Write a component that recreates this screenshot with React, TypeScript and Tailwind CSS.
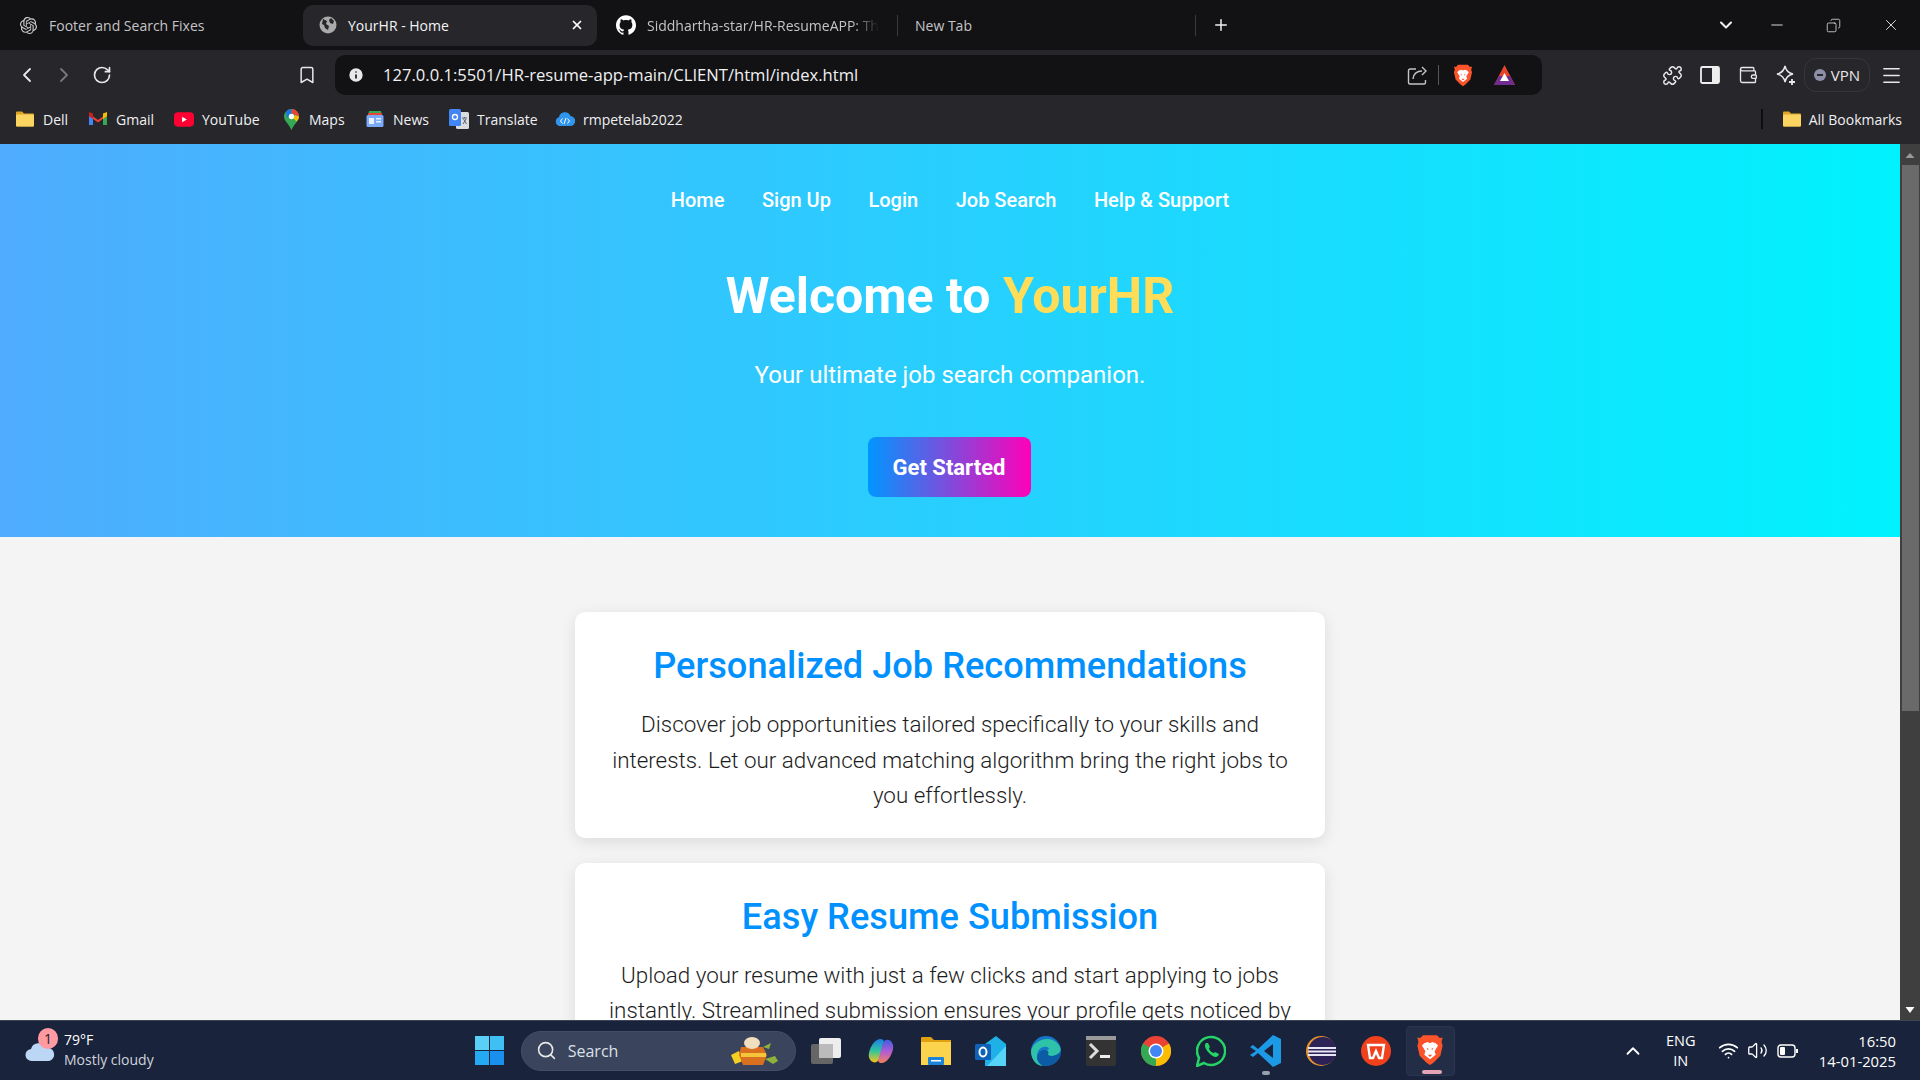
import React from "react";
import { ChevronLeft, ChevronRight, RotateCw, Bookmark, Info, Puzzle, Wallet, Menu, ChevronDown, ChevronUp, Minus, X, Plus, Search, Wifi, Volume2, Copy } from "lucide-react";
import { SiOpenai, SiGithub } from "react-icons/si";

const Brave = ({ s = 22 }: { s?: number }) => (
  <svg width={s} height={s * 1.15} viewBox="0 0 24 28">
    <path d="M6 1h12l2.500 2.500L23 3l-1 4 1 3-2 9-6 6-3 2-3-2-6-6-2-9 1-3-1-4 2.500.5z" fill="#fb542b" />
    <path d="M7 8l3-1 2 1 2-1 3 1 2 2-3 5 1 3-5 4-5-4 1-3-3-5z" fill="#fff" />
    <path d="M9 12l2 1-1 1zM15 12l-2 1 1 1zM10 18h4l-2 2z" fill="#fb542b" />
  </svg>
);
const Folder = ({ s = 20 }: { s?: number }) => (
  <svg width={s} height={s} viewBox="0 0 20 20">
    <path d="M1 3.500A1 1 0 0 1 2 2.500h5l2 2h9a1 1 0 0 1 1 1v11a1 1 0 0 1-1 1H2a1 1 0 0 1-1-1z" fill="#e0a526" />
    <rect x="1" y="5.500" width="18" height="12" rx="1" fill="#fcd462" />
  </svg>
);
const Gmail = () => (
  <svg width="18" height="14" viewBox="0 0 18 14">
    <path d="M0 2v11h4V5z" fill="#4285f4" /><path d="M18 2v11h-4V5z" fill="#34a853" />
    <path d="M0 1.500 9 8l9-6.500V4L9 10.500 0 4z" fill="#ea4335" /><path d="M14 1.500 18 0v4l-4 3z" fill="#fbbc04" /><path d="M0 0l4 1.500V7L0 4z" fill="#c5221f" />
  </svg>
);
const YouTube = () => (
  <svg width="21" height="15" viewBox="0 0 21 15"><rect width="21" height="15" rx="4" fill="#ff0033" /><path d="M8.500 4.500l5 3-5 3z" fill="#fff" /></svg>
);
const MapsPin = () => (
  <svg width="15" height="21" viewBox="0 0 15 21">
    <path d="M7.500 0A7.500 7.500 0 0 1 15 7.500C15 12 10 15 7.500 21 5 15 0 12 0 7.500A7.500 7.500 0 0 1 7.500 0z" fill="#34a853" />
    <path d="M2 2.500A7.500 7.500 0 0 1 7.500 0V5L3 9z" fill="#1a73e8" /><path d="M7.500 0A7.500 7.500 0 0 1 15 7.500L11 6 7.500 4z" fill="#ea4335" /><path d="M15 7.500c0 2-1 3.500-2.500 5L9.500 9.500 11 6z" fill="#fbbc04" />
    <circle cx="7.500" cy="7.500" r="2.700" fill="#fff" />
  </svg>
);
const News = () => (
  <svg width="18" height="18" viewBox="0 0 18 18">
    <path d="M3 1h12l1 5H2z" fill="#34a853" /><path d="M2 3h14v3H2z" fill="#ea4335" /><rect x="0.500" y="5" width="17" height="12" rx="1.500" fill="#7baaf7" />
    <rect x="3" y="8" width="5" height="6" fill="#e8f0fe" /><rect x="10" y="8" width="5" height="1.500" fill="#e8f0fe" /><rect x="10" y="11" width="5" height="1.500" fill="#e8f0fe" />
  </svg>
);
const Translate = () => (
  <svg width="20" height="21" viewBox="0 0 20 21">
    <rect x="7" y="3" width="13" height="17" rx="1.500" fill="#dadce0" /><rect x="0" y="0" width="12" height="17" rx="1.500" fill="#4285f4" />
    <circle cx="6" cy="8" r="2.500" fill="none" stroke="#fff" strokeWidth="1.300" /><path d="M13 9h5M15.500 8v1M14 15l3-5M14.500 10l3 5" stroke="#5f6368" strokeWidth="1" />
  </svg>
);
const CloudCode = () => (
  <svg width="20" height="16" viewBox="0 0 20 16">
    <path d="M5 15A4.500 4.500 0 0 1 4 6.200 6 6 0 0 1 15.500 5 5 5 0 0 1 15 15z" fill="#2f95ee" />
    <path d="M7.500 7.500 5.500 10l2 2.500M12.500 7.500l2 2.500-2 2.500M11 7l-2 6" stroke="#fff" strokeWidth="1" fill="none" />
  </svg>
);

const Bm = ({ icon, label, w }: { icon: React.ReactNode; label: string; w: string }) => (
  <div className={`flex items-center gap-[8px] ${w}`}>
    <span className="flex w-[20px] justify-center">{icon}</span>
    <span className="text-[14px] text-[#f0f0f2]">{label}</span>
  </div>
);

const Card = ({ title, children }: { title: string; children: React.ReactNode }) => (
  <section className="w-[750px] shrink-0 rounded-[10px] bg-white px-[30px] pb-[24px] pt-[27px] text-center shadow-[0_4px_15px_rgba(0,0,0,0.1)]">
    <h2 className="text-[36.200px] font-medium leading-[54px] text-[#0091ff]">{title}</h2>
    <p className="mt-[14px] text-[22.400px] font-light leading-[35.600px] text-[#1c1c1c]">{children}</p>
  </section>
);

const Tb = ({ children, w }: { children: React.ReactNode; w: string }) => (
  <div className={`flex items-center justify-center ${w}`}>{children}</div>
);

export default function App() {
  return (
    <div className="flex h-screen w-[1920px] flex-col overflow-hidden bg-[#f4f4f4] [font-family:'Open_Sans',sans-serif]">
      {/* tabs */}
      <div className="flex h-[50px] shrink-0 items-center bg-[#121214] text-[14px] text-[#c4c4c8]">
        <div className="flex w-[303px] items-center gap-[12px] pl-[20px]">
          <SiOpenai size={17} color="#d0d0d0" />
          <span>Footer and Search Fixes</span>
        </div>
        <div className="flex h-[41px] w-[294px] items-center rounded-[10px] bg-[#26262b] pl-[16px] pr-[13px] text-[#f4f4f6]">
          <svg width="18" height="18" viewBox="0 0 18 18"><circle cx="9" cy="9" r="8.500" fill="#aaa" /><path d="M4 3l4 2-1 3 3 2-1 4-3-2-1-3-2-1zM12 2l3 3-1 3-3-1-1-3z" fill="#26262b" /></svg>
          <span className="ml-[11px] flex-1">YourHR - Home</span>
          <X size={14} strokeWidth={3} color="#fff" />
        </div>
        <div className="flex w-[301px] items-center gap-[11px] overflow-hidden border-r border-[#3a3a3e] pl-[19px] pr-[16px]">
          <SiGithub size={20} color="#fff" className="shrink-0" />
          <span className="whitespace-nowrap [mask-image:linear-gradient(90deg,#000_88%,transparent)]">Siddhartha-star/HR-ResumeAPP: Th</span>
        </div>
        <div className="flex w-[298px] items-center border-r border-[#3a3a3e] pl-[17px]"><span>New Tab</span></div>
        <Plus size={18} strokeWidth={2} color="#f0f0f0" className="ml-[16px]" />
        <div className="ml-auto flex items-center text-[#eee]">
          <ChevronDown size={20} strokeWidth={2.500} />
          <Minus size={18} strokeWidth={1.200} className="ml-[32px]" />
          <Copy size={15} strokeWidth={1.200} className="ml-[40px] -scale-x-100" />
          <X size={18} strokeWidth={1.200} className="ml-[41px] mr-[20px]" />
        </div>
      </div>
      {/* toolbar */}
      <div className="flex h-[50px] shrink-0 items-center bg-[#26262b] text-[#e8e8ea]">
        <ChevronLeft size={24} strokeWidth={1.800} className="ml-[15px]" />
        <ChevronRight size={24} strokeWidth={1.800} color="#77777c" className="ml-[13px]" />
        <RotateCw size={20} strokeWidth={2} className="ml-[16px]" />
        <Bookmark size={20} strokeWidth={1.800} className="ml-[185px]" />
        <div className="ml-[18px] flex h-[40px] w-[1207px] items-center rounded-[10px] bg-[#121214] pl-[12px] pr-[26px]">
          <Info size={18} fill="#e8e8ea" color="#121214" strokeWidth={2.200} />
          <span className="ml-[18px] text-[16.600px] text-[#f0f0f2]">127.0.0.1:5501/HR-resume-app-main/CLIENT/html/index.html</span>
          <svg width="21" height="21" viewBox="0 0 21 21" fill="none" stroke="#c4c4c8" strokeWidth="1.400" className="ml-auto"><path d="M9 4H3a1.500 1.500 0 0 0-1.500 1.500v12A1.500 1.500 0 0 0 3 19h14a1.500 1.500 0 0 0 1.500-1.500V15" /><path d="M6 14c0-5 4-8 9-8M15 2l4 4-4 4" /></svg>
          <span className="ml-[10px] h-[20px] w-px bg-[#55555a]" />
          <span className="ml-[14px]"><Brave s={20} /></span>
          <svg width="23" height="23" viewBox="0 0 23 23" className="ml-[20px]"><path d="M11.500 1 22 21H1z" fill="#e8432b" /><path d="M1 21h21l-5-9H6z" fill="#6f2c91" /><path d="M11.500 9 16 17H7z" fill="#fff" /></svg>
        </div>
        <Puzzle size={21} strokeWidth={1.700} className="ml-[120px]" />
        <svg width="20" height="20" viewBox="0 0 20 20" className="ml-[17px]"><rect x="1" y="2" width="18" height="16" rx="1.500" fill="none" stroke="#eee" strokeWidth="1.800" /><rect x="12" y="2" width="7" height="16" fill="#eee" /></svg>
        <Wallet size={20} strokeWidth={1.600} className="ml-[18px]" />
        <svg width="20" height="22" viewBox="0 0 20 22" fill="none" stroke="#e8e8ea" strokeWidth="1.500" className="ml-[18px]"><path d="M9 2c1 5 3 7 8 8-5 1-7 3-8 8-1-5-3-7-8-8 5-1 7-3 8-8z" /><path d="M16 15v6M13 18h6" strokeWidth="1.800" /></svg>
        <div className="ml-[8px] flex h-[34px] w-[66px] items-center justify-center gap-[5px] rounded-[12px] border border-[#36363c] text-[15px]">
          <span className="relative h-[12px] w-[12px] rounded-full bg-[#8d8fa8]"><span className="absolute left-[3px] top-[5px] h-[2px] w-[6px] bg-[#26262b]" /></span>VPN
        </div>
        <Menu size={23} strokeWidth={1.500} className="ml-[10px]" />
      </div>
      {/* bookmarks */}
      <div className="flex h-[44px] shrink-0 items-center bg-[#26262b] pb-[6px] pl-[15px]">
        <Bm icon={<Folder />} label="Dell" w="w-[73px]" />
        <Bm icon={<Gmail />} label="Gmail" w="w-[86px]" />
        <Bm icon={<YouTube />} label="YouTube" w="w-[107px]" />
        <Bm icon={<MapsPin />} label="Maps" w="w-[84px]" />
        <Bm icon={<News />} label="News" w="w-[84px]" />
        <Bm icon={<Translate />} label="Translate" w="w-[106px]" />
        <Bm icon={<CloudCode />} label="rmpetelab2022" w="w-[130px]" />
        <span className="ml-auto mr-[19px] h-[20px] w-[2px] bg-[#0e0e10]" />
        <span className="mr-[7px]"><Folder /></span>
        <span className="mr-[18px] text-[14px] text-[#f0f0f2]">All Bookmarks</span>
      </div>
      {/* page */}
      <div className="flex min-h-0 flex-1 [font-family:Roboto,sans-serif]">
        <main className="flex min-w-0 flex-1 flex-col overflow-hidden bg-[#f4f4f4]">
          <header className="flex h-[393px] shrink-0 flex-col items-center bg-[linear-gradient(90deg,#4facfe,#00f2fe)] text-white">
            <nav className="mt-[42px] flex h-[28px] items-center gap-[37.500px] text-[20px] font-medium"><a>Home</a><a>Sign Up</a><a>Login</a><a>Job Search</a><a>Help &amp; Support</a></nav>
            <h1 className="mt-[49px] text-[50px] font-bold leading-[66px]">Welcome to <span className="text-[#ffdd59]">YourHR</span></h1>
            <p className="mt-[28px] text-[24px] leading-[36px]">Your ultimate job search companion.</p>
            <button className="mr-[2px] mt-[44px] h-[60px] w-[163px] rounded-[8px] bg-[linear-gradient(90deg,#0096ff,#ff00b8)] text-[22px] font-bold text-white">Get Started</button>
          </header>
          <div className="flex flex-col items-center gap-[25px] pt-[75px]">
            <Card title="Personalized Job Recommendations">Discover job opportunities tailored specifically to your skills and interests. Let our advanced matching algorithm bring the right jobs to you effortlessly.</Card>
            <Card title="Easy Resume Submission">Upload your resume with just a few clicks and start applying to jobs instantly. Streamlined submission ensures your profile gets noticed by employers.</Card>
          </div>
        </main>
        <div className="flex w-[20px] shrink-0 flex-col items-center bg-[#3f3f3f]">
          <svg width="12" height="21" viewBox="0 0 12 21" className="shrink-0"><path d="M1.500 14 6 9l4.500 5z" fill="#9a9a9a" /></svg>
          <div className="h-[546px] w-[17px] bg-[#6a6a6a]" />
          <svg width="12" height="20" viewBox="0 0 12 20" className="mt-auto shrink-0"><path d="M1.500 7h9L6 13z" fill="#fff" /></svg>
        </div>
      </div>
      {/* taskbar */}
      <div className="relative flex h-[60px] shrink-0 items-center border-t border-[#3d4557] bg-[#19233b] text-white">
        <div className="relative ml-[25px] flex w-[39px] items-center">
          <svg width="31" height="23" viewBox="0 0 31 23"><circle cx="21" cy="6" r="4" fill="#f08a30" /><path d="M7 22a6 6 0 0 1-1-12 8 8 0 0 1 15-1 6.500 6.500 0 0 1 3 13z" fill="#bcd6f5" /></svg>
          <span className="absolute left-[13px] top-[-11px] flex h-[21px] w-[20px] items-center justify-center rounded-full bg-[#ff9aa2] text-[14px] text-[#1c1c20]">1</span>
        </div>
        <div className="-mt-[2px] text-[14px] leading-[20px]"><div>79°F</div><div className="text-[#d0d4dc]">Mostly cloudy</div></div>
        <svg width="29" height="29" viewBox="0 0 29 29" className="ml-[321px]"><rect width="14" height="14" fill="#5ad0f8" /><rect x="15" width="14" height="14" fill="#3fc0f5" /><rect y="15" width="14" height="14" fill="#25a9f2" /><rect x="15" y="15" width="14" height="14" fill="#1a90ee" /></svg>
        <div className="ml-[17px] flex h-[40px] w-[275px] items-center rounded-full border border-[#454e64] bg-[#3a445c] pl-[14px]">
          <Search size={21} strokeWidth={1.800} color="#e8e8e8" />
          <span className="ml-[11px] text-[16px] text-[#dde0e6]">Search</span>
          <svg width="52" height="32" viewBox="0 0 52 32" className="ml-[109px] shrink-0"><path d="M4 20l8-4 4 10-8 3z" fill="#f5d020" /><path d="M14 12h22l4 8-4 10H16l-4-10z" fill="#d9701f" /><path d="M14 18h25v4H14z" fill="#f3c53a" /><ellipse cx="25" cy="8" rx="8" ry="6" fill="#f0e0c0" /><path d="M36 12l8-4-2 6zM38 24l10-3 3 5-5 3z" fill="#8db13a" /></svg>
        </div>
        <Tb w="ml-[15px] w-[30px]"><span className="relative block h-[26px] w-[30px]"><span className="absolute bottom-0 left-0 h-[20px] w-[22px] rounded-[2px] bg-[#666]" /><span className="absolute right-0 top-0 h-[20px] w-[22px] rounded-[2px] bg-[#eee]" /><span className="absolute bottom-[6px] left-[8px] h-[14px] w-[14px] bg-[#bbb]" /></span></Tb>
        <Tb w="ml-[26px] w-[28px]"><svg width="28" height="28" viewBox="0 0 28 28"><path d="M10 3c3-2 6-1 7 1l-5 18c-1 3-4 4-6 3-3-1-5-5-4-9 1-5 4-11 8-13z" fill="url(#cp1)" /><path d="M18 25c-3 2-6 1-7-1l5-18c1-3 4-4 6-3 3 1 5 5 4 9-1 5-4 11-8 13z" fill="url(#cp2)" /><defs><linearGradient id="cp1" x1="0" y1="0" x2="0" y2="1"><stop stopColor="#1e7de8" /><stop offset="0.5" stopColor="#2fc4a0" /><stop offset="1" stopColor="#f5c518" /></linearGradient><linearGradient id="cp2" x1="0" y1="0" x2="0" y2="1"><stop stopColor="#3b5fe0" /><stop offset="0.5" stopColor="#b05bd6" /><stop offset="1" stopColor="#f5805a" /></linearGradient></defs></svg></Tb>
        <Tb w="ml-[26px] w-[30px]"><svg width="30" height="28" viewBox="0 0 30 28"><path d="M0 1a1 1 0 0 1 1-1h9l3 3h17v4H0z" fill="#e0a010" /><path d="M0 5h30v23H0z" fill="#fcd34d" /><rect x="7" y="20" width="16" height="8" rx="1" fill="#1b84d8" /><rect x="10" y="23" width="10" height="1.500" fill="#fff" /></svg></Tb>
        <Tb w="ml-[24px] w-[31px]"><svg width="31" height="30" viewBox="0 0 31 30"><path d="M10 8 21 0l10 8v20a2 2 0 0 1-2 2H10z" fill="#20b0e8" /><path d="M31 10v20H12z" fill="#56d4f8" /><rect x="0" y="8" width="16" height="16" rx="1.500" fill="#0f62b8" /><ellipse cx="8" cy="16" rx="3.500" ry="4.500" fill="none" stroke="#fff" strokeWidth="2" /></svg></Tb>
        <Tb w="ml-[25px] w-[30px]"><svg width="30" height="30" viewBox="0 0 30 30"><circle cx="15" cy="15" r="15" fill="#1576c8" /><path d="M0 15C2 3 22-3 29 11c2 6-3 9-8 9-3 0-6-1-6-4 0-2 3-2 3-4-4-3-11-1-12 7-1 5 2 9 6 11C6 30 0 24 0 15z" fill="#2ec2a8" /><path d="M30 15a15 15 0 0 1-18 14.500C6 27 5 21 8 17c2-3 6-4 9-2 1 2 0 3 0 4 3 2 9 1 13-4z" fill="#0c5ba5" /></svg></Tb>
        <Tb w="ml-[25px] w-[30px]"><span className="relative flex h-[30px] w-[30px] flex-col rounded-[2px] bg-[#333]"><span className="h-[4px] bg-[#999]" /><svg width="30" height="26" viewBox="0 0 30 26"><path d="M4 4l7 7-7 7" fill="none" stroke="#ddd" strokeWidth="3" /><rect x="14" y="15" width="10" height="3" fill="#eee" /></svg></span></Tb>
        <Tb w="ml-[25px] w-[30px]"><svg width="30" height="30" viewBox="0 0 30 30"><circle cx="15" cy="15" r="15" fill="#ea4335" /><path d="M15 15 2 7.500A15 15 0 0 0 15 30z" fill="#34a853" /><path d="M15 15 28 7.500A15 15 0 0 1 15 30z" fill="#fbbc04" /><circle cx="15" cy="15" r="7.500" fill="#fff" /><circle cx="15" cy="15" r="6" fill="#4285f4" /></svg></Tb>
        <Tb w="ml-[25px] w-[30px]"><svg width="30" height="32" viewBox="0 0 30 32"><path d="M1 31l2-8A14 14 0 1 1 8 28z" fill="none" stroke="#25d366" strokeWidth="2.500" /><path d="M10 8c-2 2-1 6 3 10s7 5 9 3l1-2-4-2-1 1c-2 0-5-3-5-5l1-1-2-4z" fill="#25d366" /></svg></Tb>
        <Tb w="ml-[24px] w-[31px]"><svg width="31" height="32" viewBox="0 0 31 32"><path d="M23 0 31 4v24l-8 4L8 18l-5 4-3-2 6-4-6-4 3-2 5 4z" fill="#1d9ae6" /><path d="M23 9v14l-9-7z" fill="#19233b" /></svg></Tb>
        <Tb w="ml-[25px] w-[30px]"><svg width="30" height="30" viewBox="0 0 30 30"><circle cx="15" cy="15" r="15" fill="#e6922e" /><circle cx="16.500" cy="15" r="14" fill="#2c2255" /><rect x="2" y="11" width="28" height="2" fill="#e6e6f5" /><rect x="2" y="14.500" width="28" height="2" fill="#e6e6f5" /><rect x="2" y="18" width="28" height="2" fill="#e6e6f5" /></svg></Tb>
        <Tb w="ml-[25px] w-[30px]"><svg width="30" height="30" viewBox="0 0 30 30"><circle cx="15" cy="15" r="15" fill="#f0401c" /><path d="M7 9h16l-2 13h-3l-3-7-3 7H9z" fill="none" stroke="#fff" strokeWidth="2.400" /></svg></Tb>
        <div className="relative ml-[15px] flex h-[50px] w-[49px] items-center justify-center rounded-[4px] border border-[#2a3450] bg-[#232d46]">
          <Brave s={28} />
          <span className="absolute bottom-[1px] left-[15px] h-[4px] w-[20px] rounded-full bg-[#e3a5b5]" />
        </div>
        <span className="absolute bottom-[5px] left-[1262px] h-[4px] w-[8px] rounded-full bg-[#99a0ad]" />
        <ChevronUp size={22} strokeWidth={2} className="ml-[167px]" />
        <div className="ml-[10px] w-[54px] text-center text-[14.500px] leading-[20px]">ENG<br />IN</div>
        <Wifi size={21} strokeWidth={2} className="ml-[10px]" />
        <Volume2 size={21} strokeWidth={1.500} className="ml-[8px]" />
        <svg width="22" height="14" viewBox="0 0 22 14" className="ml-[9px]"><rect x="1" y="1" width="17" height="12" rx="3" fill="none" stroke="#fff" strokeWidth="1.400" /><rect x="3" y="3" width="5" height="8" rx="1" fill="#fff" /><rect x="19" y="5" width="2" height="4" fill="#fff" /></svg>
        <div className="ml-auto mr-[24px] text-right text-[14.800px] leading-[20px]">16:50<br />14-01-2025</div>
      </div>
    </div>
  );
}
